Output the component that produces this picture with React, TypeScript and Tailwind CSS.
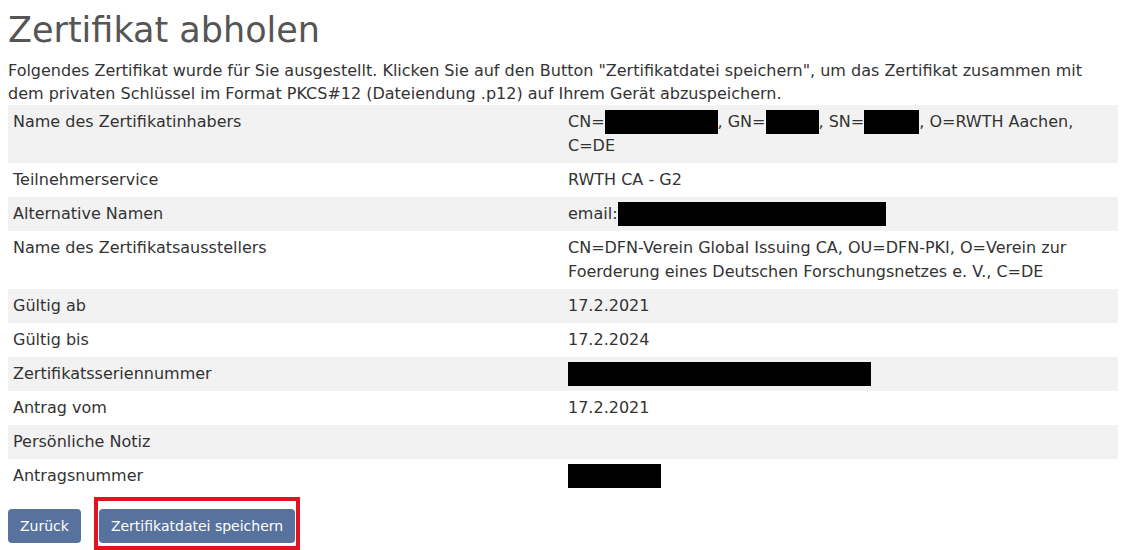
import React from 'react'

const font = { fontFamily: '"DejaVu Sans", Verdana, sans-serif' }

function Redact({ w }: { w: number }) {
  return <span className="inline-block h-[24px] bg-black align-top" style={{ width: w }} />
}

const rows: { label: string; value: React.ReactNode }[] = [
  {
    label: 'Name des Zertifikatinhabers',
    value: (
      <>
        CN=<Redact w={113} />, GN=<Redact w={53} />, SN=<Redact w={55} />, O=RWTH Aachen, C=DE
      </>
    ),
  },
  { label: 'Teilnehmerservice', value: 'RWTH CA - G2' },
  {
    label: 'Alternative Namen',
    value: (
      <>
        email:<Redact w={268} />
      </>
    ),
  },
  {
    label: 'Name des Zertifikatsausstellers',
    value: 'CN=DFN-Verein Global Issuing CA, OU=DFN-PKI, O=Verein zur Foerderung eines Deutschen Forschungsnetzes e. V., C=DE',
  },
  { label: 'Gültig ab', value: '17.2.2021' },
  { label: 'Gültig bis', value: '17.2.2024' },
  { label: 'Zertifikatsseriennummer', value: <Redact w={303} /> },
  { label: 'Antrag vom', value: '17.2.2021' },
  { label: 'Persönliche Notiz', value: '\u00a0' },
  { label: 'Antragsnummer', value: <Redact w={93} /> },
]

export default function App() {
  return (
    <div className="w-[1126px] h-[550px] bg-white overflow-hidden px-2" style={font}>
      {/* Title */}
      <h1 className="text-[35px] leading-[40px] text-[#555] pt-[10px] pb-[8px]">Zertifikat abholen</h1>

      <p className="text-[16px] leading-[23px] pt-[1px] text-[#333]">
        Folgendes Zertifikat wurde für Sie ausgestellt. Klicken Sie auf den Button "Zertifikatdatei speichern", um das
        Zertifikat zusammen mit dem privaten Schlüssel im Format PKCS#12 (Dateiendung .p12) auf Ihrem Gerät abzuspeichern.
      </p>

      {/* Details */}
      <table className="w-[1110px] table-fixed border-collapse text-[16px] leading-[24px] text-[#333]">
        <tbody>
          {rows.map((r, i) => (
            <tr key={r.label} className={i % 2 === 0 ? 'bg-[#f2f2f2]' : 'bg-white'}>
              <td className="w-[555px] px-[5px] py-[5px] align-top">{r.label}</td>
              <td className="px-[5px] py-[5px] align-top">{r.value}</td>
            </tr>
          ))}
        </tbody>
      </table>

      {/* Actions */}
      <div className="flex items-start gap-[13px] pt-[4px]">
        <button className="h-[34px] px-[12px] mt-[12px] rounded-[4px] bg-[#58729e] text-white text-[14px]">
          Zurück
        </button>
        <div className="border-[4px] border-[#e0141e] px-[1px] pb-[3px] pt-[8px]">
          <button className="h-[34px] px-[12px] rounded-[4px] bg-[#58729e] text-white text-[14px]">
            Zertifikatdatei speichern
          </button>
        </div>
      </div>
    </div>
  )
}
